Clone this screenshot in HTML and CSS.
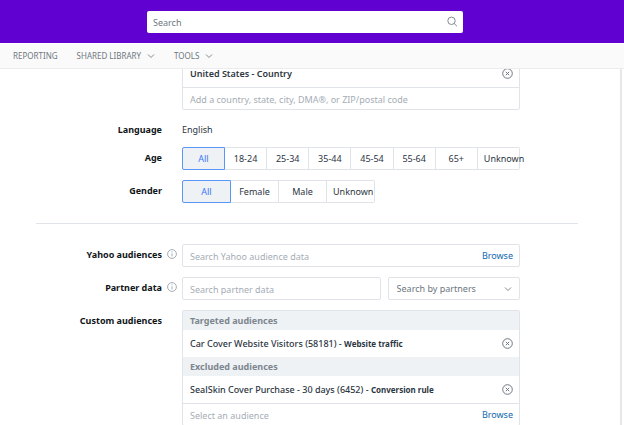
FILE: index.html
```html
<!DOCTYPE html>
<html lang="en">
<head>
  <meta charset="UTF-8" />
  <meta name="viewport" content="width=device-width, initial-scale=1.0" />
  <title>Audience targeting</title>
  <link rel="stylesheet" href="styles.css">
</head>
<body>
  <header class="topbar">
    <form class="search">
      <input type="search" placeholder="Search" aria-label="Search" />
      <button class="icon-btn" type="button" aria-label="Search">
        <svg width="12" height="12" viewBox="0 0 12 12"><circle cx="5.5" cy="4.8" r="3.7" /><path d="M8.2 7.5L11 10.3" /></svg>
      </button>
    </form>
  </header>

  <nav class="menu">
    <a href="#">REPORTING</a>
    <a href="#">SHARED LIBRARY
      <svg class="chevron" width="8" height="6" viewBox="0 0 8 6"><path d="M1 1.5l3 3 3-3" /></svg>
    </a>
    <a href="#">TOOLS
      <svg class="chevron" width="8" height="6" viewBox="0 0 8 6"><path d="M1 1.5l3 3 3-3" /></svg>
    </a>
  </nav>

  <main class="page">
    <div class="content">
      <!-- Location, scrolled partly under the menu -->
      <div class="row">
        <div class="field box">
          <div class="item location">
            <span>United States - Country</span>
            <button class="icon-btn" type="button" aria-label="Remove United States">
              <svg width="11" height="11" viewBox="0 0 11 11"><circle cx="5.5" cy="5.5" r="4.8" /><path d="M3.8 3.8l3.4 3.4M7.2 3.8L3.8 7.2" /></svg>
            </button>
          </div>
          <div class="entry">
            <input type="text" placeholder="Add a country, state, city, DMA®, or ZIP/postal code" aria-label="Location" />
          </div>
        </div>
      </div>

      <div class="row language">
        <span class="label">Language</span>
        <span class="field">English</span>
      </div>

      <div class="row">
        <span class="label" id="age-label">Age</span>
        <div class="field options age" role="radiogroup" aria-labelledby="age-label">
          <label><input type="radio" name="age" checked />All</label>
          <label><input type="radio" name="age" />18-24</label>
          <label><input type="radio" name="age" />25-34</label>
          <label><input type="radio" name="age" />35-44</label>
          <label><input type="radio" name="age" />45-54</label>
          <label><input type="radio" name="age" />55-64</label>
          <label><input type="radio" name="age" />65+</label>
          <label><input type="radio" name="age" />Unknown</label>
        </div>
      </div>

      <div class="row">
        <span class="label" id="gender-label">Gender</span>
        <div class="field options gender" role="radiogroup" aria-labelledby="gender-label">
          <label><input type="radio" name="gender" checked />All</label>
          <label><input type="radio" name="gender" />Female</label>
          <label><input type="radio" name="gender" />Male</label>
          <label><input type="radio" name="gender" />Unknown</label>
        </div>
      </div>

      <hr>

      <div class="row">
        <label class="label" for="yahoo">Yahoo audiences</label>
        <svg class="info" width="10" height="10" viewBox="0 0 10 10"><circle cx="5" cy="5" r="4.4" /><path d="M5 4.4v3M5 2.4v1" /></svg>
        <div class="field box entry">
          <input type="text" id="yahoo" placeholder="Search Yahoo audience data" />
          <a href="#">Browse</a>
        </div>
      </div>

      <div class="row">
        <label class="label" for="partner">Partner data</label>
        <svg class="info" width="10" height="10" viewBox="0 0 10 10"><circle cx="5" cy="5" r="4.4" /><path d="M5 4.4v3M5 2.4v1" /></svg>
        <div class="field pair">
          <div class="box entry">
            <input type="text" id="partner" placeholder="Search partner data" />
          </div>
          <div class="box picker">
            <select aria-label="Search by partners"><option>Search by partners</option></select>
            <svg class="chevron" width="8" height="6" viewBox="0 0 8 6"><path d="M1 1.5l3 3 3-3" /></svg>
          </div>
        </div>
      </div>

      <div class="row">
        <label class="label" for="custom">Custom audiences</label>
        <div class="field box">
          <div class="group">Targeted audiences</div>
          <div class="item">
            <span>Car Cover Website Visitors (58181) - <b>Website traffic</b></span>
            <button class="icon-btn" type="button" aria-label="Remove Car Cover Website Visitors">
              <svg width="11" height="11" viewBox="0 0 11 11"><circle cx="5.5" cy="5.5" r="4.8" /><path d="M3.8 3.8l3.4 3.4M7.2 3.8L3.8 7.2" /></svg>
            </button>
          </div>
          <div class="group">Excluded audiences</div>
          <div class="item">
            <span>SealSkin Cover Purchase - 30 days (6452) - <b>Conversion rule</b></span>
            <button class="icon-btn" type="button" aria-label="Remove SealSkin Cover Purchase">
              <svg width="11" height="11" viewBox="0 0 11 11"><circle cx="5.5" cy="5.5" r="4.8" /><path d="M3.8 3.8l3.4 3.4M7.2 3.8L3.8 7.2" /></svg>
            </button>
          </div>
          <div class="entry">
            <input type="text" id="custom" placeholder="Select an audience" />
            <a href="#">Browse</a>
          </div>
        </div>
      </div>
    </div>
  </main>
</body>
</html>
```
FILE: styles.css
```css
* {
  box-sizing: border-box;
}
body {
  margin: 0;
  height: 100vh;
  display: flex;
  flex-direction: column;
  overflow: hidden;
  font-family: "Noto Sans", sans-serif;
  font-size: 9px;
  line-height: 14px;
  color: #2c363f;
  background: #fff;
}
input, select, button {
  font: inherit;
  color: inherit;
  border: none;
  background: none;
  padding: 0;
  margin: 0;
  outline: none;
}
a {
  color: #0f69af;
  text-decoration: none;
}
svg {
  display: block;
  flex: none;
  fill: none;
  stroke: #828a93;
}

/* Header */
.topbar {
  flex: none;
  padding: 11px 161px 10px 147px;
  background: #6001d2;
}
.search {
  display: flex;
  align-items: center;
  height: 22px;
  padding: 0 5px 0 6px;
  background: #fff;
  border-radius: 2px;
}
.search input {
  flex: 1;
  min-width: 0;
  padding-top: 1px;
  appearance: none;
}
.search input::placeholder {
  color: #6e7780;
  opacity: 1;
}
.menu {
  flex: none;
  display: flex;
  align-items: center;
  gap: 19px;
  height: 26px;
  padding: 0 13px;
  font-size: 8px;
  background: #fafafa;
  border-top: 1px solid #fff;
  border-bottom: 1px solid #ececee;
}
.menu a {
  display: flex;
  align-items: center;
  gap: 6px;
  color: #6e7780;
}

/* Page */
.page {
  flex: 1;
  min-height: 0;
  overflow: hidden;
  margin-right: 2px;
  padding: 0 42px 0 36px;
  border-right: 2px solid #e6e7eb;
}
.content {
  margin-top: -10px;
}
.row {
  display: grid;
  grid-template-columns: 126px 20px 1fr;
  margin-bottom: 10px;
  padding-right: 58px;
}
.label {
  padding-top: 4px;
  text-align: right;
  font-weight: 700;
  color: #101518;
}
.info {
  margin: 5px 0 0 5px;
  stroke: #a3abb3;
}
.field {
  grid-column: 3;
  min-width: 0;
}
.language {
  padding-top: 3px;
}
.language .label {
  padding-top: 0;
}
.box {
  border: 1px solid #e0e4e9;
  border-radius: 2px;
}
hr {
  margin: 20px 0;
  border: none;
  border-top: 1px solid #e0e4e9;
}

/* Boxes */
.entry {
  display: flex;
  align-items: center;
  height: 23px;
  padding: 0 6px 0 7px;
}
.entry input {
  flex: 1;
  min-width: 0;
  padding-top: 2px;
}
.entry input::placeholder {
  color: #a5adb5;
  opacity: 1;
}
.box > .entry {
  height: 22px;
  border-top: 1px solid #e0e4e9;
}
.item {
  display: flex;
  align-items: center;
  justify-content: space-between;
  height: 27px;
  padding: 0 6px 0 7px;
  font-weight: 500;
}
.item b {
  font-size: 8px;
  font-weight: 700;
}
.item svg {
  stroke: #6e7780;
}
.location {
  font-weight: 600;
}
.group {
  height: 19px;
  padding: 3px 7px 0;
  font-weight: 700;
  color: #7d868f;
  background: #eef2f5;
}
.pair {
  display: grid;
  grid-template-columns: 3fr 2fr;
  gap: 7px;
}
.picker {
  display: flex;
  align-items: center;
  padding: 0 7px 0 8px;
}
.picker select {
  flex: 1;
  min-width: 0;
  appearance: none;
  color: #6e7780;
}

/* Option bars */
.options {
  display: grid;
}
.age {
  grid-template-columns: 43px repeat(7, minmax(0, 1fr));
}
.gender {
  grid-template-columns: 49px repeat(3, 48px);
}
.options label {
  height: 23px;
  padding: 4px 6px;
  text-align: center;
  white-space: nowrap;
  border: 1px solid #e0e4e9;
  border-left: none;
}
.options label:last-child {
  border-radius: 0 2px 2px 0;
}
.options label:has(input:checked) {
  color: #3b78f5;
  background: #eef2f5;
  border: 1px solid #5a96fa;
  border-radius: 2px 0 0 2px;
}
.options input {
  appearance: none;
  width: 0;
  height: 0;
  position: absolute;
}
```
